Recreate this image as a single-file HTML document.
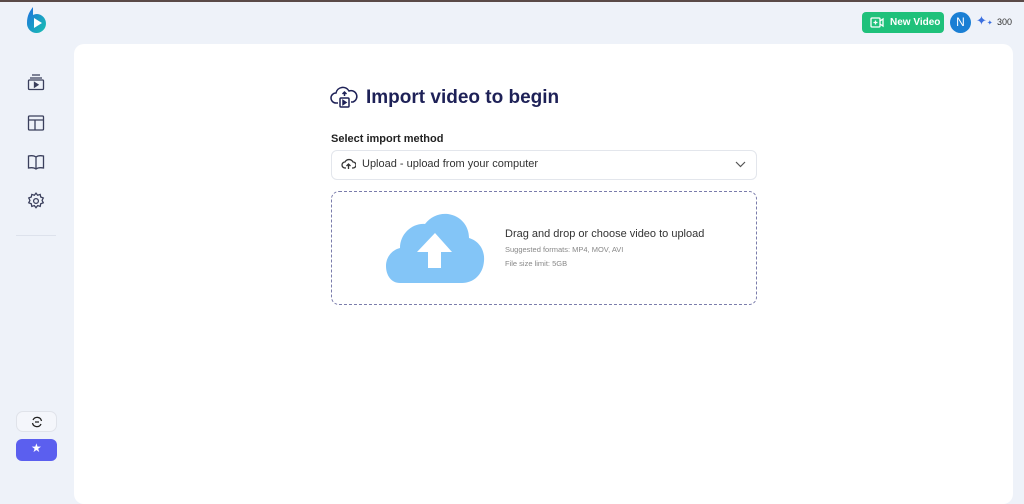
<!DOCTYPE html>
<html><head><style>
*{margin:0;padding:0;box-sizing:border-box}
body{width:1024px;height:487px;background:#eef2f9;font-family:"Liberation Sans",sans-serif;position:relative;overflow:hidden}
.card{position:absolute;left:74px;top:44px;width:939px;height:460px;background:#fff;border-radius:10px}
.ic{position:absolute;left:27px}
</style></head><body>
<div style="position:absolute;left:0;top:0;width:1024px;height:2px;background:#5a4a48"></div>
<svg style="position:absolute;left:25px;top:5px" width="24" height="31" viewBox="0 0 24 31">
<defs><linearGradient id="g" x1="0" y1="0" x2="1" y2="1"><stop offset="0" stop-color="#1e6fe0"/><stop offset="1" stop-color="#18c2b0"/></linearGradient></defs>
<path d="M8 2 C5 6 2 10 2 18 A9.5 9.5 0 1 0 12 9 C10 9 9 9.5 8 10 Z" fill="url(#g)"/>
<path d="M9 13 L17 18 L9 23 Z" fill="#fff"/></svg>
<svg class="ic" style="top:73px" width="18" height="18" viewBox="0 0 18 18" fill="none" stroke="#3a3f5c" stroke-width="1.3"><path d="M5 2h8M3 5h12"/><rect x="1.5" y="7" width="15" height="9.5" rx="1"/><path d="M7.5 9.5l3.5 2.3-3.5 2.3z" fill="#3a3f5c"/></svg>
<svg class="ic" style="top:114px" width="18" height="18" viewBox="0 0 18 18" fill="none" stroke="#3a3f5c" stroke-width="1.3"><rect x="1.5" y="2" width="15" height="14" rx="1"/><path d="M1.5 6h15M8 6v10"/></svg>
<svg class="ic" style="top:153px" width="18" height="18" viewBox="0 0 18 18" fill="none" stroke="#3a3f5c" stroke-width="1.3"><path d="M9 4C7 2.5 4 2.5 1.5 3v12c2.5-.5 5.5-.5 7.5 1 2-1.5 5-1.5 7.5-1V3C14 2.5 11 2.5 9 4zM9 4v12"/></svg>
<svg class="ic" style="top:192px" width="18" height="18" viewBox="0 0 24 24" fill="none" stroke="#3a3f5c" stroke-width="1.7"><circle cx="12" cy="12" r="3.2"/><path d="M12 1.5l2.2 2.8 3.4-1.1.7 3.5 3.4 1.3-1.6 3.2 1.6 3.2-3.4 1.3-.7 3.5-3.4-1.1-2.2 2.8-2.2-2.8-3.4 1.1-.7-3.5-3.4-1.3 1.6-3.2-1.6-3.2 3.4-1.3.7-3.5 3.4 1.1z"/></svg>
<div style="position:absolute;left:16px;top:235px;width:40px;height:1px;background:#dde2ec"></div>
<div style="position:absolute;left:16px;top:411px;width:41px;height:21px;border:1px solid #e0e3ea;border-radius:7px;background:#f4f6fb"></div>
<svg style="position:absolute;left:31px;top:416px" width="12" height="12" viewBox="0 0 12 12" fill="none" stroke="#222" stroke-width="1.3"><path d="M2 4a4.5 4.5 0 0 1 8.5 1M10 8a4.5 4.5 0 0 1-8.5-1M4 6h4"/></svg>
<div style="position:absolute;left:16px;top:439px;width:41px;height:22px;border-radius:6px;background:#5b5fef"></div>
<div style="position:absolute;left:31px;top:441px;color:#fff;font-size:12px">★</div>
<div style="position:absolute;left:862px;top:12px;width:82px;height:21px;background:#1fc17b;border-radius:4px;color:#fff;font-size:10px;font-weight:bold;line-height:21px;padding-left:28px">New Video</div>
<svg style="position:absolute;left:870px;top:17px" width="14" height="11" viewBox="0 0 14 11" fill="none" stroke="#fff" stroke-width="1.3"><rect x="1" y="1" width="9" height="9" rx="1"/><path d="M10 4l3-2v7l-3-2M5.5 3.5v4M3.5 5.5h4"/></svg>
<div style="position:absolute;left:950px;top:12px;width:21px;height:21px;border-radius:50%;background:#1a7fd4;color:#fff;font-size:12px;text-align:center;line-height:21px">N</div>
<div style="position:absolute;left:976px;top:13px;color:#3a6fe0;font-size:13px">✦<span style="font-size:7px">✦</span></div>
<div style="position:absolute;left:997px;top:17px;font-size:9px;color:#333">300</div>
<div class="card"></div>
<svg style="position:absolute;left:330px;top:86px" width="29" height="23" viewBox="0 0 29 23" fill="none" stroke="#1e2157" stroke-width="1.5"><path d="M8 17H6a5 5 0 0 1 0-10 7 7 0 0 1 13-2 5.5 5.5 0 0 1 4 11h-2"/><rect x="10" y="12" width="9" height="9" rx="1"/><path d="M13 14.5l3 2-3 2z" fill="#1e2157"/><path d="M14.5 10V6M12.5 8l2-2 2 2"/></svg>
<div style="position:absolute;left:366px;top:87px;font-size:19px;font-weight:bold;color:#1e2157">Import video to begin</div>
<div style="position:absolute;left:331px;top:133px;font-size:11px;font-weight:bold;color:#222;">Select import method</div>
<div style="position:absolute;left:331px;top:150px;width:426px;height:30px;border:1px solid #e3e6ec;border-radius:6px"></div>
<svg style="position:absolute;left:341px;top:158px" width="15" height="12" viewBox="0 0 15 12" fill="none" stroke="#333" stroke-width="1.3"><path d="M5 10H4a3 3 0 0 1 0-6 4.5 4.5 0 0 1 8 0 3 3 0 0 1 0 6h-1M7.5 11V6M5.5 8l2-2 2 2"/></svg>
<div style="position:absolute;left:362px;top:158px;font-size:11px;color:#333">Upload - upload from your computer</div>
<svg style="position:absolute;left:735px;top:161px" width="11" height="7" viewBox="0 0 11 7" fill="none" stroke="#555" stroke-width="1.2"><path d="M1 1l4.5 4.5L10 1"/></svg>
<div style="position:absolute;left:331px;top:191px;width:426px;height:114px;border:1px dashed #7a7cab;border-radius:8px"></div>
<svg style="position:absolute;left:386px;top:212px" width="99" height="72" viewBox="0 0 99 72"><path d="M14 71C5 71 0 63 0 54 0 45 6 38 14 36 14 22 26 11 39 12 45 4 54 1 62 2 75 4 83 14 83 26 93 29 99 38 98 49 97 63 87 71 76 71Z" fill="#83c5f7"/><path d="M49 21L31 40H42V56H55V40H66Z" fill="#fff"/></svg>
<div style="position:absolute;left:505px;top:228px;font-size:11px;color:#333">Drag and drop or choose video to upload</div>
<div style="position:absolute;left:505px;top:245px;font-size:7.5px;color:#888">Suggested formats: MP4, MOV, AVI</div>
<div style="position:absolute;left:505px;top:259px;font-size:7.5px;color:#888">File size limit: 5GB</div>
</body></html>
